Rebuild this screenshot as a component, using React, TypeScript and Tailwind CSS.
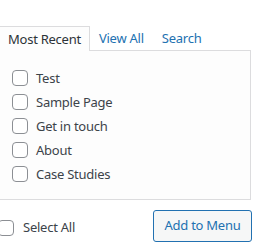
import { useState } from "react";

const items = ["Test", "Sample Page", "Get in touch", "About", "Case Studies"];

function Box({ checked, onChange }: { checked: boolean; onChange: () => void }) {
  return (
    <button
      type="button"
      role="checkbox"
      aria-checked={checked}
      onClick={onChange}
      className="flex h-4 w-4 shrink-0 items-center justify-center rounded-[4px] border border-[#8c8f94] bg-white"
    >
      {checked && (
        <svg viewBox="0 0 16 16" className="h-4 w-4 text-[#2271b1]">
          <path d="M4 8.5l2.5 2.5L12 5" fill="none" stroke="currentColor" strokeWidth="2" />
        </svg>
      )}
    </button>
  );
}

export default function App() {
  const [tab, setTab] = useState("Most Recent");
  const [checked, setChecked] = useState<Record<string, boolean>>({});
  const all = items.every((i) => checked[i]);

  return (
    <div className="h-[245px] w-[263px] overflow-hidden bg-white pt-[25px] font-['Segoe_UI','Noto_Sans',sans-serif] text-[13px] tracking-[-0.25px] text-[#3c434a]">
      <div className="-ml-px w-[252px]">
        {/* tabs */}
        <div className="flex h-[25px] items-end">
          {["Most Recent", "View All", "Search"].map((t) => (
            <button
              key={t}
              onClick={() => setTab(t)}
              className={
                t === tab
                  ? "relative z-10 -mb-px h-[25px] border border-b-0 border-[#dcdcde] bg-[#fdfdfd] px-[8px] leading-[24px] text-[#2c3338]"
                  : "h-[24px] px-[9px] leading-[24px] text-[#2271b1]"
              }
            >
              {t}
            </button>
          ))}
        </div>
        {/* list panel */}
        <div className="flex h-[150px] flex-col gap-2 border border-[#dcdcde] bg-[#fdfdfd] pl-[12px] pt-[19px]">
          {items.map((i) => (
            <label key={i} className="flex h-4 items-center gap-[8px] leading-4">
              <Box
                checked={!!checked[i]}
                onChange={() => setChecked((c) => ({ ...c, [i]: !c[i] }))}
              />
              <span>{i}</span>
            </label>
          ))}
        </div>
      </div>
      {/* footer */}
      <div className="mt-[10px] flex w-[252px] items-center justify-between">
        <label className="-ml-[2px] mt-[3px] flex items-center gap-[9px]">
          <Box
            checked={all}
            onChange={() =>
              setChecked(all ? {} : Object.fromEntries(items.map((i) => [i, true])))
            }
          />
          <span>Select All</span>
        </label>
        <button className="h-[32px] w-[99px] rounded-[3px] border border-[#2271b1] bg-[#f6f7f7] text-[13px] text-[#2271b1]">
          Add to Menu
        </button>
      </div>
    </div>
  );
}
